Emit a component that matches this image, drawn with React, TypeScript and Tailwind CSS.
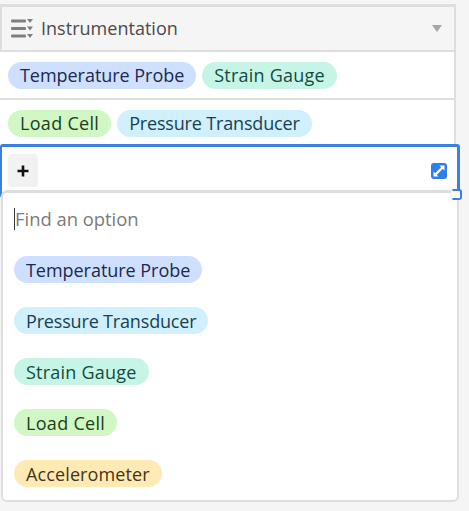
import type { ReactNode } from 'react';

const font = "font-['Open_Sans','Noto_Sans',sans-serif]";

function Pill({ label, color, text, extra = '' }: { label: string; color: string; text: string; extra?: string }) {
  return (
    <span className={`inline-flex h-[27px] items-center rounded-full px-3 text-[18px] leading-none whitespace-nowrap ${color} ${text} ${extra}`}>
      {label}
    </span>
  );
}

function Row({ children, className = '' }: { children: ReactNode; className?: string }) {
  return <div className={`flex items-center gap-[6px] bg-white pl-2 ${className}`}>{children}</div>;
}

function FieldIcon() {
  return (
    <svg width="22" height="19" viewBox="0 0 22 19" className="shrink-0 text-[#7f7f7f]" fill="currentColor">
      <rect x="0" y="0.5" width="15" height="3" rx="1" />
      <rect x="0" y="8" width="15" height="3" rx="1" />
      <rect x="0" y="15.5" width="15" height="3" rx="1" />
      <path d="M16 0h6l-3 4z" />
      <path d="M16 7.5h6l-3 4z" />
      <path d="M16 15h6l-3 4z" />
    </svg>
  );
}

function ExpandIcon() {
  return (
    <svg width="16" height="16" viewBox="0 0 16 16" className="shrink-0">
      <rect width="16" height="16" rx="3" fill="#2d7ff0" />
      <path d="M4.5 11.5l7-7" stroke="white" strokeWidth="2.4" />
      <path d="M8.5 2.5h5v5zM2.5 8.5v5h5z" fill="white" />
    </svg>
  );
}

const temperature = { label: 'Temperature Probe', color: 'bg-[#cfdfff]', text: 'text-[#1a2a50]', extra: 'tracking-[-0.04px]' };
const pressure = { label: 'Pressure Transducer', color: 'bg-[#d0f0fd]', text: 'text-[#173f52]', extra: 'tracking-[-0.17px]' };
const strain = { label: 'Strain Gauge', color: 'bg-[#c6f5e8]', text: 'text-[#124b3f]', extra: 'tracking-[0.22px]' };
const load = { label: 'Load Cell', color: 'bg-[#d1f7c4]', text: 'text-[#1b401b]', extra: 'tracking-[0.3px]' };
const accel = { label: 'Accelerometer', color: 'bg-[#ffeab6]', text: 'text-[#463413]', extra: 'tracking-[0.12px]' };

export default function App() {
  const options = [temperature, pressure, strain, load, accel];

  return (
    <div className={`relative h-[511px] w-[469px] overflow-hidden bg-[#f5f5f5] pt-1 ${font}`}>
      <div className="w-[456px] border-t-[3px] border-r-2 border-[#dedede]">
        <div className="flex h-[45px] items-center border-b-2 border-l-2 border-[#dedede] bg-[#f5f5f5] pl-[9px] pr-[12px]">
          <FieldIcon />
          <span className="ml-[8px] flex-1 text-[18px] tracking-[0.02px] text-[#4a4a4a]">Instrumentation</span>
          <span className="h-0 w-0 border-x-[5px] border-t-[7px] border-x-transparent border-t-[#a6a6a6]" />
        </div>
        <Row className="h-[48px] border-b-2 border-[#dedede]">
          <Pill {...temperature} />
          <Pill {...strain} />
        </Row>
        <Row className="h-[46px]">
          <Pill {...load} />
          <Pill {...pressure} />
        </Row>
      </div>

      <div className="absolute left-0 top-[144px] flex h-[54px] w-[460px] items-start justify-between rounded-[3px] border-2 border-t-[3px] border-r-[3px] border-[#3b7fe0] bg-white pl-[6px] pr-[10px] pt-[7px]">
        <button className="flex h-[33px] w-[30px] items-center justify-center rounded-[4px] bg-[#f2f2f2]">
          <svg width="12" height="12" viewBox="0 0 12 12"><path d="M6 0.5v11M0.5 6h11" stroke="#111" strokeWidth="2.6" /></svg>
        </button>
        <span className="mt-[9px]"><ExpandIcon /></span>
      </div>

      <div className="absolute left-[1px] top-[190px] h-[312px] w-[458px] rounded-[6px] border-2 border-t-[3px] border-[#dedede] bg-white">
        <div className="flex h-[50px] items-center pl-[11px] pt-[2px] text-[18.4px] text-[#7a7a7a]">
          <span className="h-[22px] w-px bg-[#333333]" />
          Find an option
        </div>
        <div className="flex flex-col items-start gap-[24px] pl-[11px] pt-[13px]">
          {options.map((o) => (
            <Pill key={o.label} {...o} />
          ))}
        </div>
      </div>
      <div className="absolute left-[451px] top-[189px] h-[11px] w-[11px] rounded-[3px] border-2 border-[#3b7fe0] border-l-transparent bg-white" />
    </div>
  );
}
